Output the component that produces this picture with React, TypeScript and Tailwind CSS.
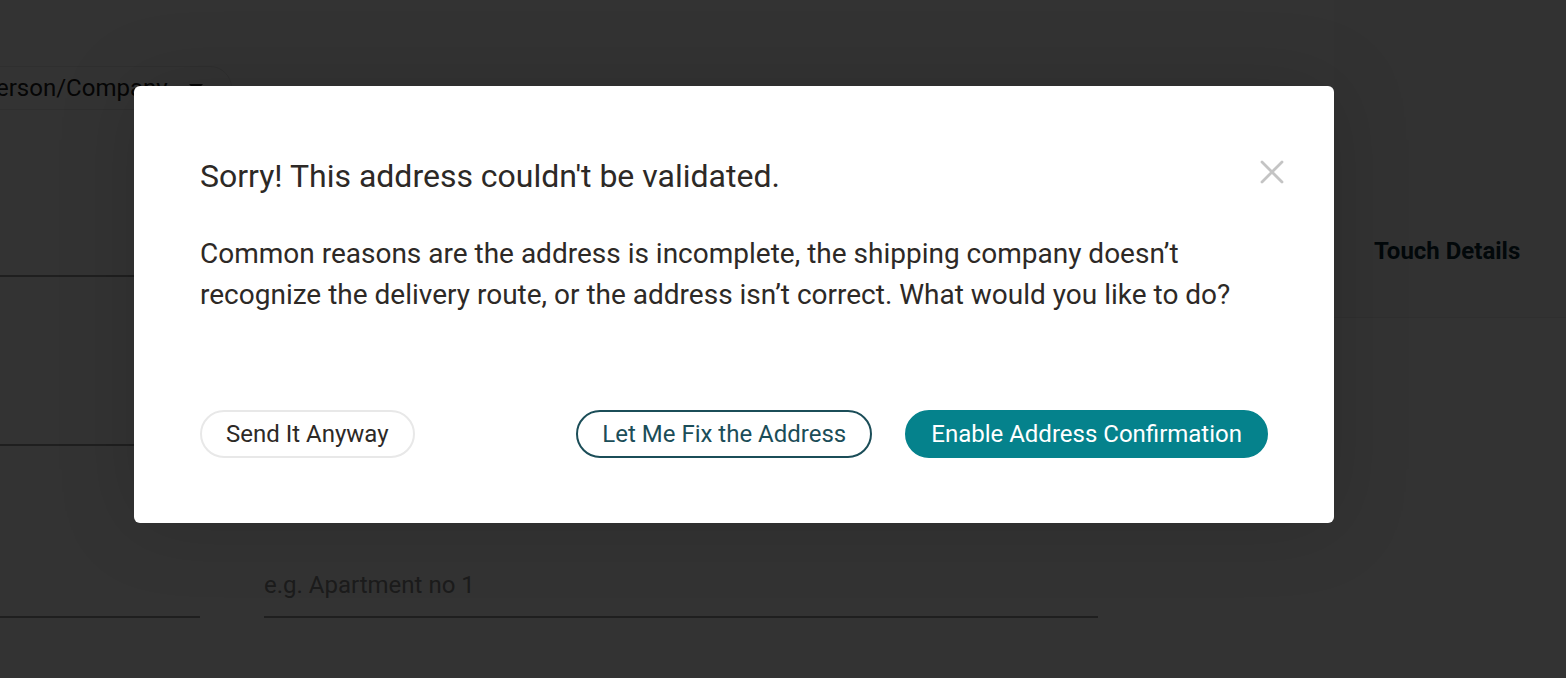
import { useState } from 'react'

/* ─── Icons ───────────────────────────────────────────────────────── */
const CloseIcon = () => (
    <svg width={24} height={24} viewBox="0 0 24 24" fill="none" stroke="currentColor" strokeWidth={2.8} strokeLinecap="round" aria-hidden="true">
        <path d="M2 2l20 20M22 2L2 22" />
    </svg>
)

const CaretDown = () => (
    <svg width={14} height={8} viewBox="0 0 14 8" fill="currentColor" aria-hidden="true">
        <path d="M0 0h14L7 8z" />
    </svg>
)

/* ─── Page behind the dialog ──────────────────────────────────────── */
const UnderlinedField = ({ placeholder, className }: { placeholder?: string; className: string }) => (
    <div className={`flex items-end border-b-2 border-[#9a9a9a] ${className}`}>
        {placeholder && <span className="pb-[13px] text-[24px] text-[#8a8a8a]">{placeholder}</span>}
    </div>
)

const BackgroundPage = () => (
    <div className="h-[678px] w-full bg-white flex flex-col">
        <div className="flex items-start">
            <div className="flex flex-col flex-1">
                {/* ── type picker ── */}
                <div className="pt-[66px]">
                    <div className="-ml-[40px] w-[272px] h-[44px] rounded-full border border-[#e9e9e9] flex items-center justify-between pl-5 pr-[28px] text-[24px] text-[#222]">
                        <span>Person/Company</span>
                        <CaretDown />
                    </div>
                </div>
                <UnderlinedField className="mt-[121px] w-[600px] h-[46px]" />
                <UnderlinedField className="mt-[123px] w-[600px] h-[46px]" />
                <div className="flex items-end gap-16 mt-[122px]">
                    <UnderlinedField className="w-[200px] h-[46px]" />
                    <UnderlinedField placeholder="e.g. Apartment no 1" className="w-[834px] h-[50px]" />
                </div>
            </div>
            {/* ── side tabs ── */}
            <div className="w-[232px] h-[318px] bg-[#f9f9f9] border-b border-[#eaeaea] flex items-start pt-[233px] pl-10">
                <span className="text-[24px] font-bold text-[#0b2a36]">Touch Details</span>
            </div>
        </div>
    </div>
)

/* ─── Dialog ──────────────────────────────────────────────────────── */
export default function App() {
    const [open, setOpen] = useState(true)

    return (
        <div className="relative h-[678px] w-full overflow-hidden font-['Roboto',sans-serif]">
            <BackgroundPage />

            {open && (
                <div className="absolute inset-0 bg-black/80 pl-[134px] pt-[86px]">
                    <div className="relative w-[1200px] rounded-md bg-white px-[66px] pt-[70px] pb-[65px] shadow-[0_0_80px_rgba(0,0,0,0.15)]">
                        <button
                            onClick={() => setOpen(false)}
                            className="absolute right-[50px] top-[74px] text-[#c4c4c4]"
                            aria-label="Close"
                        >
                            <CloseIcon />
                        </button>

                        <h2 className="text-[32px] leading-[40px] text-[#2d2926]">
                            Sorry! This address couldn't be validated.
                        </h2>

                        <p className="mt-[37px] text-[28px] leading-[41px] text-[#2d2926]">
                            Common reasons are the address is incomplete, the shipping company doesn’t recognize the delivery route, or the address isn’t correct. What would you like to do?
                        </p>

                        <div className="mt-[95px] flex items-center justify-between">
                            <button className="h-[48px] rounded-full border-2 border-[#e8e8e8] px-6 text-[24px] text-[#2d2926]">
                                Send It Anyway
                            </button>
                            <div className="flex items-center gap-[33px]">
                                <button className="h-[48px] rounded-full border-2 border-[#1b4d58] px-6 text-[24px] text-[#1b4d58]">
                                    Let Me Fix the Address
                                </button>
                                <button className="h-[48px] rounded-full border-2 border-[#05828c] bg-[#05828c] px-6 text-[24px] text-white">
                                    Enable Address Confirmation
                                </button>
                            </div>
                        </div>
                    </div>
                </div>
            )}
        </div>
    )
}
